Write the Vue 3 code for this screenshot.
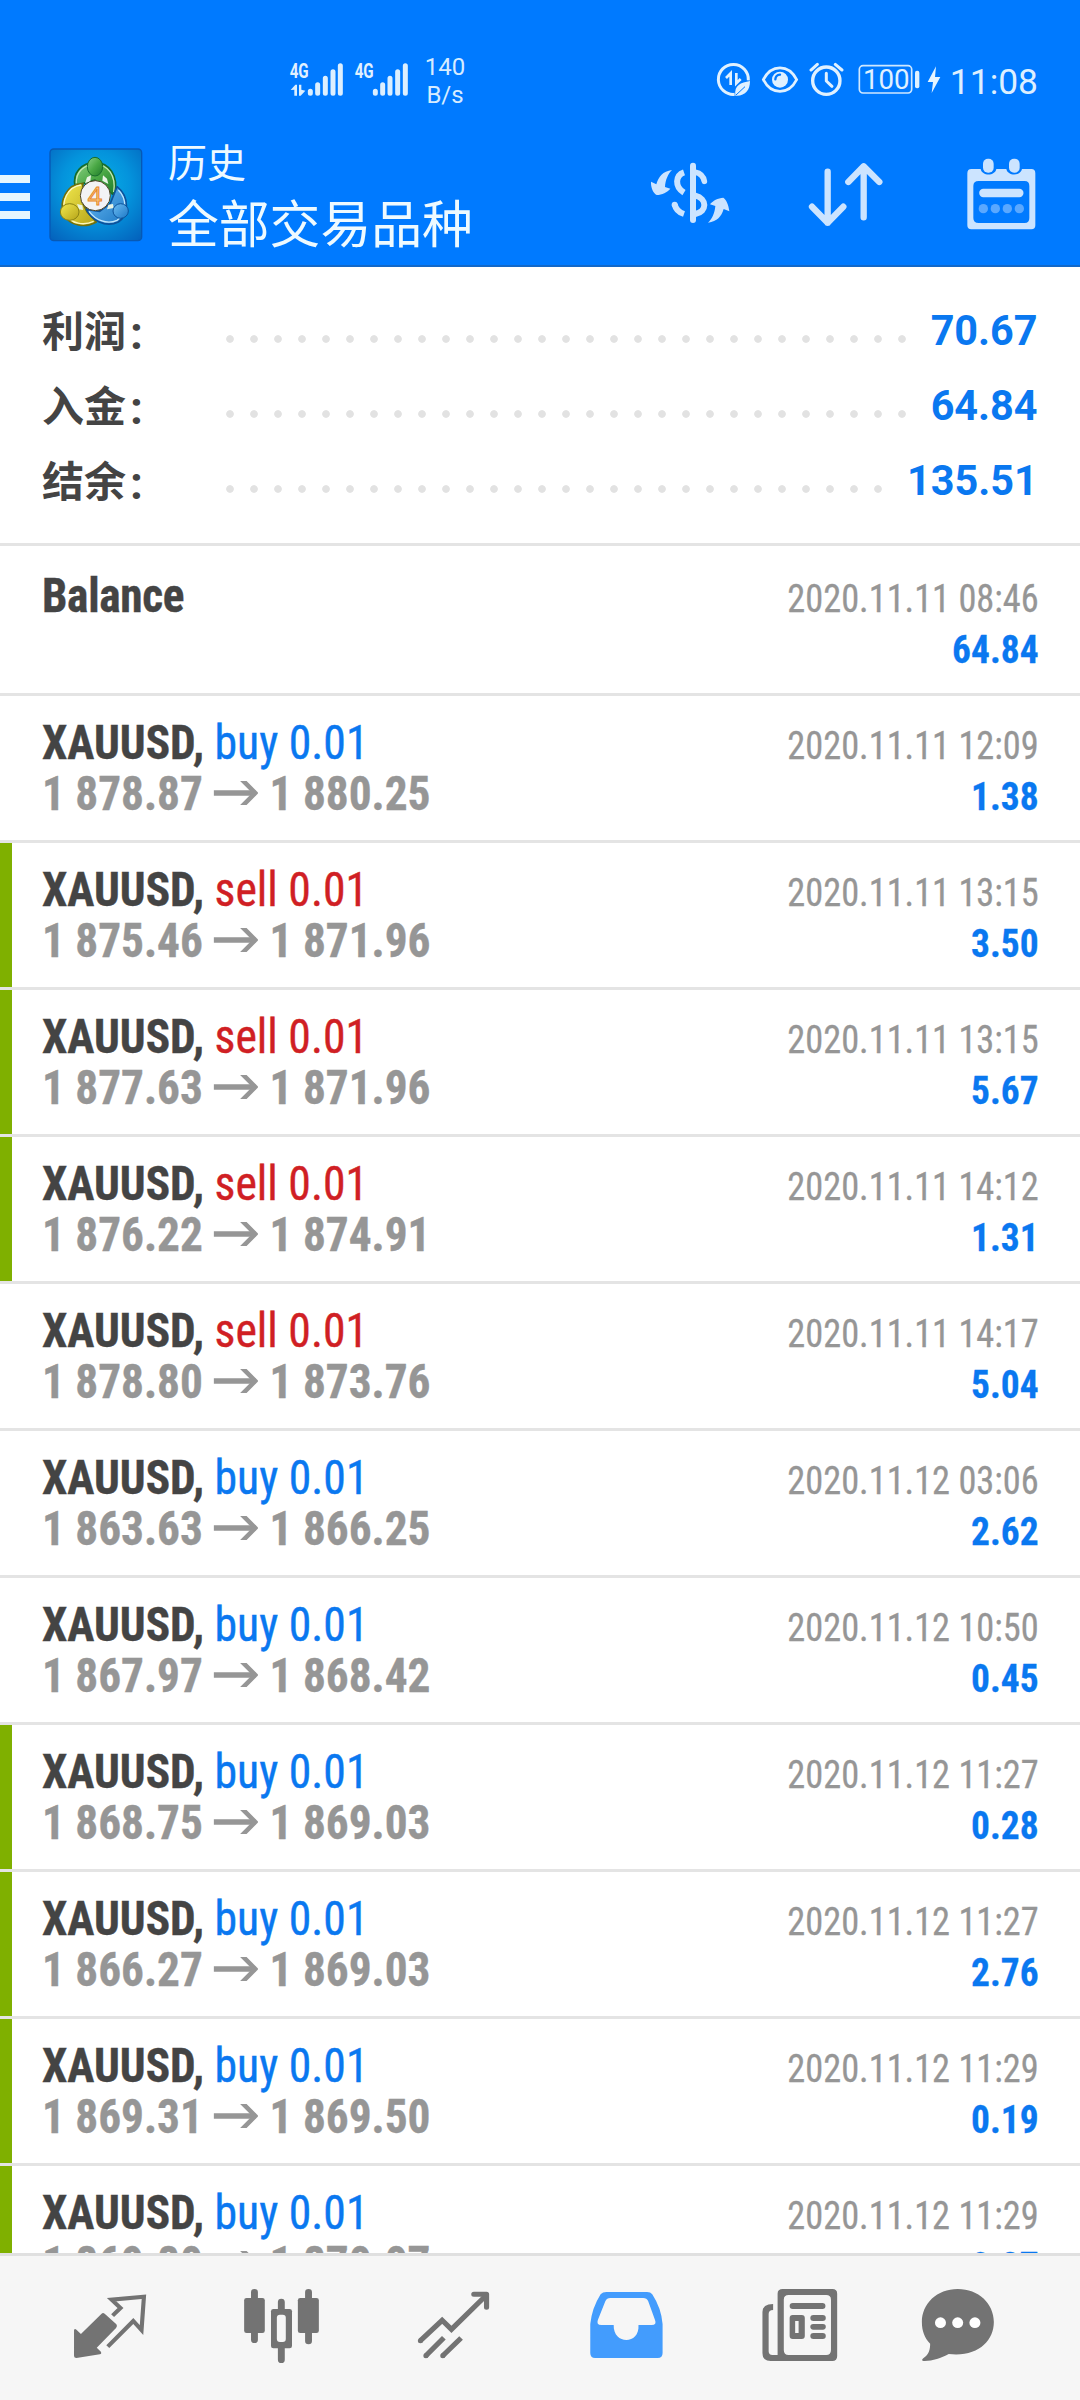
<script setup>
const totals = [
  { label: '利润', value: '70.67' },
  { label: '入金', value: '64.84' },
  { label: '结余', value: '135.51' },
]

const deals = [
  { side: 'buy', from: '1 878.87', to: '1 880.25', time: '2020.11.11 12:09', profit: '1.38', mark: false },
  { side: 'sell', from: '1 875.46', to: '1 871.96', time: '2020.11.11 13:15', profit: '3.50', mark: true },
  { side: 'sell', from: '1 877.63', to: '1 871.96', time: '2020.11.11 13:15', profit: '5.67', mark: true },
  { side: 'sell', from: '1 876.22', to: '1 874.91', time: '2020.11.11 14:12', profit: '1.31', mark: true },
  { side: 'sell', from: '1 878.80', to: '1 873.76', time: '2020.11.11 14:17', profit: '5.04', mark: false },
  { side: 'buy', from: '1 863.63', to: '1 866.25', time: '2020.11.12 03:06', profit: '2.62', mark: false },
  { side: 'buy', from: '1 867.97', to: '1 868.42', time: '2020.11.12 10:50', profit: '0.45', mark: false },
  { side: 'buy', from: '1 868.75', to: '1 869.03', time: '2020.11.12 11:27', profit: '0.28', mark: true },
  { side: 'buy', from: '1 866.27', to: '1 869.03', time: '2020.11.12 11:27', profit: '2.76', mark: true },
  { side: 'buy', from: '1 869.31', to: '1 869.50', time: '2020.11.12 11:29', profit: '0.19', mark: true },
  { side: 'buy', from: '1 869.80', to: '1 870.07', time: '2020.11.12 11:29', profit: '0.27', mark: true },
]
</script>

<template>
  <div class="screen">
    <header class="top">
      <div class="status">
        <svg class="sig1" viewBox="57 0 168 240" width="56" height="80">
          <text x="59" y="113" class="net" textLength="57" lengthAdjust="spacingAndGlyphs">4G</text>
          <path d="M121 154V160M143 134V160M166 115V160M189 95V160M211 77V160" class="bars" />
          <path d="M62 150L76 134H81V167H73V149ZM87 134H94V149L106 152L92 167H87Z" fill="#dcefff" />
        </svg>
        <svg class="sig2" viewBox="252 0 168 240" width="56" height="80">
          <text x="254" y="113" class="net" textLength="57" lengthAdjust="spacingAndGlyphs">4G</text>
          <path d="M316 154V160M338 134V160M360 115V160M383 95V160M406 77V160" class="bars" />
        </svg>
        <div class="speed"><span>140</span><span>B/s</span></div>
        <div class="grow"></div>
        <svg viewBox="48 0 105 240" width="35" height="80" fill="none" stroke="#e0f1ff">
          <path d="M104 163A45 45 0 1 1 145 121" stroke-width="9" />
          <path d="M78 114L92 100V135M109 99V130L122 117" stroke-width="8" />
          <path d="M106 167C102 135 122 128 150 123C150 150 136 169 106 167Z" fill="#e0f1ff" stroke="none" />
          <path d="M108 165L135 140" stroke="#007aff" stroke-width="3" />
        </svg>
        <svg class="eye" viewBox="183 0 114 240" width="38" height="80">
          <path d="M190 119C214 72 266 72 290 119C266 166 214 166 190 119Z" fill="none" stroke="#e0f1ff" stroke-width="8" />
          <circle cx="240" cy="119" r="24" fill="#e0f1ff" />
          <path d="M226 118Q227 105 240 104" fill="none" stroke="#007aff" stroke-width="7" stroke-linecap="round" />
        </svg>
        <svg class="alarm" viewBox="327 0 106 240" width="35.3" height="80" fill="none" stroke="#e0f1ff">
          <circle cx="379" cy="122" r="41" stroke-width="10" />
          <path d="M379 100V123L396 139" stroke-width="9" stroke-linecap="round" stroke-linejoin="round" />
          <path d="M333 90L352 73M406 73L426 90" stroke-width="9" stroke-linecap="round" />
        </svg>
        <svg class="battery" viewBox="474 0 188 240" width="62.7" height="80">
          <rect x="478" y="77" width="157" height="82" rx="11" fill="none" stroke="#cfe8ff" stroke-width="5" />
          <text x="489" y="147" class="pct" textLength="140" lengthAdjust="spacingAndGlyphs">100</text>
          <rect x="645" y="92" width="13" height="53" rx="6" fill="#e0f1ff" />
        </svg>
        <svg class="bolt" viewBox="680 0 42 240" width="14" height="80">
          <path d="M707 79L682 126H698L694 159L720 111H704Z" fill="#e6f5ff" />
        </svg>
        <span class="clock">11:08</span>
      </div>

      <div class="appbar">
        <div class="burger"><i></i><i></i><i></i></div>
        <svg class="logo" viewBox="148 0 281 411" width="93.7" height="137">
          <defs>
            <radialGradient id="tile" cx=".5" cy=".4" r=".75">
              <stop offset="0" stop-color="#06b2e8" /><stop offset=".5" stop-color="#0493dc" /><stop offset="1" stop-color="#0463bd" />
            </radialGradient>
            <linearGradient id="green" x1="0" y1="0" x2="1" y2="1">
              <stop offset="0" stop-color="#8ad086" /><stop offset=".5" stop-color="#4aa845" /><stop offset="1" stop-color="#1d7a2a" />
            </linearGradient>
            <linearGradient id="gold" x1="0" y1="0" x2="1" y2="1">
              <stop offset="0" stop-color="#f2e94e" /><stop offset="1" stop-color="#b5a318" />
            </linearGradient>
            <linearGradient id="azure" x1="0" y1="0" x2="1" y2="1">
              <stop offset="0" stop-color="#6cbcf2" /><stop offset="1" stop-color="#1c78c6" />
            </linearGradient>
          </defs>
          <rect x="151" y="57" width="275" height="275" rx="11" fill="url(#tile)" stroke="#0759b5" stroke-width="4" />
          <path d="M286 150L340 250H232Z" fill="#3d5a1c" />
          <g stroke-linejoin="round">
            <path d="M226 170C218 128 246 98 286 98C328 98 358 136 345 196L318 180L286 150L252 160Z" fill="url(#green)" stroke="#176b2c" stroke-width="5" />
            <path d="M230 160C228 128 252 103 286 103C324 103 350 136 342 186" fill="none" stroke="#c4e8b2" stroke-width="4" />
            <path d="M250 160C200 162 178 214 192 252C210 290 258 294 290 276L262 246L246 214Z" fill="url(#gold)" stroke="#72700d" stroke-width="5" />
            <path d="M244 165C204 170 184 214 197 250C214 284 254 287 282 274" fill="none" stroke="#fbf7bc" stroke-width="4" />
            <path d="M352 170C390 200 388 256 356 276C316 294 276 270 260 238L300 244L332 220Z" fill="url(#azure)" stroke="#0c529b" stroke-width="5" />
            <path d="M356 180C384 208 380 252 352 271C320 286 286 268 268 244" fill="none" stroke="#bfe6fc" stroke-width="4" />
          </g>
          <path d="M262 142L274 136L272 154L256 160ZM310 136L322 146L326 162L308 152ZM232 222L248 226L250 240L238 238ZM326 224L340 222L342 234L322 238Z" fill="#e8f4e4" />
          <ellipse cx="286" cy="110" rx="23" ry="28" fill="url(#green)" stroke="#176b2c" stroke-width="3" />
          <ellipse cx="210" cy="246" rx="28" ry="25" fill="url(#gold)" stroke="#8a8212" stroke-width="3" />
          <ellipse cx="363" cy="243" rx="23" ry="22" fill="url(#azure)" stroke="#0c529b" stroke-width="3" />
          <circle cx="287" cy="197" r="45" fill="#f3f3f5" stroke="#4d4426" stroke-width="3" />
          <text x="286" y="224" text-anchor="middle" class="four">4</text>
        </svg>
        <div class="titles"><span class="t1">历史</span><span class="t2">全部交易品种</span></div>
        <div class="grow"></div>
        <svg viewBox="90 0 240 411" width="80" height="137">
          <g fill="none" stroke="#cce4ff">
            <path d="M219 107V270" stroke-width="18" stroke-linecap="round" />
            <path d="M192 127C166 136 163 170 192 188" stroke-width="18" />
            <path d="M164 223C167 238 177 247 192 252" stroke-width="18" />
            <circle cx="164" cy="224" r="9" fill="#cce4ff" stroke="none" />
            <path d="M226 127C242 130 250 138 253 154" stroke-width="17" stroke-linecap="round" />
            <path d="M226 197C262 206 262 245 226 252" stroke-width="18" />
          </g>
          <path d="M156 120C128 124 116 140 109 163L93 155C92 172 100 190 110 195C126 195 142 187 151 176L135 171C136 150 144 132 156 120Z" fill="#cce4ff" />
          <path d="M264 278C292 274 304 260 311 237L328 244C326 226 320 210 310 203C294 204 278 212 270 223L286 228C284 250 276 267 264 278Z" fill="#cce4ff" />
        </svg>
        <svg class="sort" viewBox="565 0 228 411" width="76" height="137" fill="none" stroke="#cce4ff" stroke-width="19" stroke-linecap="round" stroke-linejoin="round">
          <path d="M624 125V278M577 230L624 278L671 230M732 262V109M686 156L732 109L779 156" />
        </svg>
        <svg class="cal" viewBox="1040 0 210 411" width="70" height="137">
          <path fill-rule="evenodd" d="M1056 117H1084C1088 139 1127 139 1131 117H1161C1165 139 1204 139 1208 117H1236Q1248 117 1248 130V286Q1248 298 1236 298H1056Q1044 298 1044 286V130Q1044 117 1056 117ZM1078 153Q1062 153 1062 168V264Q1062 279 1078 279H1216Q1230 279 1230 264V168Q1230 153 1216 153Z" fill="#cce4ff" />
          <rect x="1091" y="86" width="32" height="42" rx="15" fill="#cce4ff" />
          <rect x="1169" y="86" width="32" height="42" rx="15" fill="#cce4ff" />
          <path d="M1092 189H1200" stroke="#cce4ff" stroke-width="25" stroke-linecap="round" />
          <g fill="#5aa8ff"><circle cx="1092" cy="236" r="14" /><circle cx="1128" cy="236" r="14" /><circle cx="1164" cy="236" r="14" /><circle cx="1200" cy="236" r="14" /></g>
        </svg>
      </div>
    </header>

    <section class="summary">
      <div v-for="t in totals" :key="t.label" class="total">
        <span class="label">{{ t.label }}<span class="colon">:</span></span>
        <span class="dots"></span>
        <span class="sum">{{ t.value }}</span>
      </div>
    </section>

    <main class="list">
      <div class="row first">
        <div class="left"><div class="name"><b>Balance</b></div></div>
        <div class="right"><div class="time">2020.11.11 08:46</div><div class="profit">64.84</div></div>
      </div>
      <div v-for="(d, i) in deals" :key="i" class="row" :class="{ mark: d.mark }">
        <div class="left">
          <div class="name"><b>XAUUSD,</b> <span :class="d.side">{{ d.side }} 0.01</span></div>
          <div class="prices">
            {{ d.from }}
            <svg class="arrow" viewBox="0 0 45 26" width="47.7" height="26" preserveAspectRatio="none" fill="none" stroke="#969696">
              <path d="M0 13H42" stroke-width="5.4" />
              <path d="M26.500 1H33L45 13L33 25H26.500L38.500 13Z" fill="#969696" stroke="none" />
            </svg>
            {{ d.to }}
          </div>
        </div>
        <div class="right"><div class="time">{{ d.time }}</div><div class="profit">{{ d.profit }}</div></div>
      </div>
    </main>

    <nav class="tabs">
      <svg viewBox="69.7 378 499.5 432" width="172" height="144" preserveAspectRatio="none">
        <path d="M215 600Q217 594 222 599L235 612L295 551Q299 547 304 551L338 583Q342 588 337 594L281 653L293 665Q296 671 290 673L222 684Q215 684 215 678Z" fill="#737373" />
        <path d="M327 557L350 534L324 509L418 500L411 600L387 573L313 650" fill="none" stroke="#737373" stroke-width="12" />
      </svg>
      <svg viewBox="569.2 378 499.5 432" width="172" height="144" preserveAspectRatio="none">
        <path d="M739 487V629M896 487V633M817 516V545M817 650V689" stroke="#737373" stroke-width="20" stroke-linecap="round" />
        <rect x="709" y="504" width="60" height="105" rx="7" fill="#737373" />
        <rect x="865" y="504" width="61" height="105" rx="7" fill="#737373" />
        <rect x="787" y="537" width="61" height="118" rx="7" fill="#737373" />
        <rect x="804" y="554" width="26" height="82" rx="9" fill="#f6f6f6" />
      </svg>
      <svg viewBox="1068.7 378 499.5 432" width="172" height="144" preserveAspectRatio="none" fill="none" stroke="#737373" stroke-width="15">
        <path d="M1221 632L1284 571L1311 598L1410 498" />
        <path d="M1376 493H1413V532" stroke-linecap="round" stroke-linejoin="round" />
        <path d="M1236 678L1289 623M1285 678L1339 624" />
        <g fill="#737373" stroke="none"><circle cx="1221" cy="632" r="7.5" /><circle cx="1237" cy="677" r="7.5" /><circle cx="1286" cy="677" r="7.5" /></g>
      </svg>
      <svg viewBox="0 378 499.5 432" width="172" height="144" preserveAspectRatio="none">
        <path fill-rule="evenodd" d="M193 486H311Q321 486 326 493Q352 534 356 582V669Q356 684 342 684H160Q146 684 146 669V582Q151 534 176 493Q182 486 193 486ZM204 504Q194 504 190 513L168 570Q163 585 178 585H214C212 645 290 645 286 585H324Q340 585 334 570L314 513Q310 504 300 504Z" fill="#439cfd" />
      </svg>
      <svg viewBox="499.5 378 499.5 432" width="172" height="144" preserveAspectRatio="none" fill="#737373">
        <path fill-rule="evenodd" d="M705 477H849Q863 477 863 491V678Q863 693 849 693H670Q646 693 646 669V546Q646 522 677 522V540Q664 540 664 552V664Q664 675 675 675H690V491Q690 477 705 477ZM722 495Q708 495 708 509V660Q708 675 722 675H831Q845 675 845 660V509Q845 495 831 495Z" />
        <rect x="725" y="519" width="104" height="18" rx="9" />
        <path fill-rule="evenodd" d="M734 555H760Q769 555 769 564V618Q769 627 760 627H734Q725 627 725 618V564Q725 555 734 555ZM741 573V609H751V573Z" />
        <rect x="785" y="555" width="45" height="18" rx="9" /><rect x="785" y="582" width="45" height="17" rx="8.5" /><rect x="785" y="609" width="45" height="18" rx="9" />
      </svg>
      <svg viewBox="999 378 499.5 432" width="172" height="144" preserveAspectRatio="none">
        <path d="M1213 477C1274 477 1318 521 1318 576C1318 634 1270 682 1187 672C1164 684 1138 694 1114 693Q1106 692 1113 685C1130 673 1133 658 1133 641C1117 624 1109 603 1109 576C1109 521 1153 477 1213 477Z" fill="#737373" />
        <g fill="#fff"><circle cx="1163" cy="578" r="16" /><circle cx="1213" cy="578" r="16" /><circle cx="1263" cy="578" r="16" /></g>
      </svg>
    </nav>
  </div>
</template>

<style>
html, body { margin: 0; background: #fff; }
</style>

<style scoped>
.screen { width: 1080px; height: 2400px; display: flex; flex-direction: column; overflow: hidden; background: #fff; font-family: Roboto, "Noto Sans CJK SC", sans-serif; }
svg { display: block; flex: none; }
.grow { flex: 1; }
.top { flex: none; height: 267px; box-sizing: border-box; background: #007aff; border-bottom: 2px solid #1268c8; }
.status { display: flex; height: 90px; padding: 40px 42px 0 289px; align-items: flex-start; }
.sig2 { margin-left: 9px; }
.net { font: 700 58px Roboto, sans-serif; fill: #e0f1ff; }
.bars { stroke: #dcefff; stroke-width: 15; stroke-linecap: round; fill: none; }
.speed { display: flex; flex-direction: column; align-items: center; width: 38px; margin: 13px 0 0 16px; font-size: 24px; line-height: 28px; color: #d6ecff; }
.eye { margin-left: 10px; }
.alarm { margin-left: 10px; }
.battery { margin-left: 13.7px; }
.pct { font: 400 81px Roboto, sans-serif; fill: #e0f1ff; }
.bolt { margin-left: 6px; }
.clock { margin-left: 9px; padding-top: 21px; font-size: 35.4px; line-height: 42px; color: #dcefff; }
.appbar { display: flex; height: 137px; align-items: flex-start; padding-right: 44px; }
.burger { display: flex; flex-direction: column; gap: 10px; padding-top: 45px; width: 30px; }
.burger i { height: 8px; background: #e5f6ff; }
.logo { margin-left: 19.3px; }
.four { font: 400 75px "Open Sans", sans-serif; fill: #fbd08b; stroke: #e8862a; stroke-width: 3; }
.titles { display: flex; flex-direction: column; margin-left: 25px; color: #eefaff; font-family: "Noto Sans CJK SC", sans-serif; white-space: nowrap; }
.t1 { font-size: 39px; line-height: 50px; padding-top: 5px; }
.t2 { font-size: 50.8px; line-height: 66px; padding-top: 3px; }
.sort { margin-left: 78px; }
.cal { margin-left: 82px; }
.summary { flex: none; height: 279px; box-sizing: border-box; padding: 26px 42px 0 42px; border-bottom: 3px solid #e4e4e4; }
.total { display: flex; height: 75px; align-items: center; }
.label { width: 176px; margin-top: -5px; font: 700 42px/75px "Noto Sans CJK SC", sans-serif; color: #444; }
.colon { display: inline-block; margin-left: 4px; font: 700 46px/46px Roboto, sans-serif; vertical-align: -2px; }
.dots { flex: 1; height: 24px; margin: 16px 18px 0 0; background: radial-gradient(circle at 12px 12px, #e2e2e2 3.4px, transparent 4.2px) 0 0 / 24px 24px repeat-x; }
.sum { font-size: 42px; font-weight: 700; color: #0a78f0; transform: scaleX(.985); transform-origin: right; }
.list { flex: 1; min-height: 0; overflow: hidden; font-family: "Roboto Condensed", Roboto, sans-serif; font-stretch: 75%; }
.row { display: flex; justify-content: space-between; height: 147px; box-sizing: border-box; border-bottom: 3px solid #e4e4e4; padding: 0 41.5px 0 42px; }
.first { height: 150px; padding-top: 3px; }
.mark { background: linear-gradient(#7fb000, #7fb000) 0 0 / 12px 100% no-repeat; }
.left { padding-top: 21px; font-size: 48px; line-height: 51px; white-space: nowrap; transform: scaleX(.943); transform-origin: left; -webkit-text-stroke: .4px; }
.name b { color: #444; font-weight: 700; }
.first b { letter-spacing: -.3px; }
.buy, .sell { display: inline-block; transform: scaleX(1.01); transform-origin: left; }
.buy { color: #0a78f0; }
.sell { color: #d01f24; }
.prices { color: #969696; font-weight: 700; }
.arrow { display: inline-block; vertical-align: 4px; margin-right: 1px; }
.right { padding-top: 25px; font-size: 39px; line-height: 51px; text-align: right; white-space: nowrap; -webkit-text-stroke: .3px; }
.time { color: #969696; transform: scaleX(.932); transform-origin: right; }
.profit { color: #0a78f0; font-weight: 700; transform: scaleX(.96); transform-origin: right; }
.tabs { flex: none; display: flex; height: 147px; box-sizing: border-box; padding-left: 24px; background: #f6f6f6; border-top: 3px solid #e0e0e0; }
</style>
